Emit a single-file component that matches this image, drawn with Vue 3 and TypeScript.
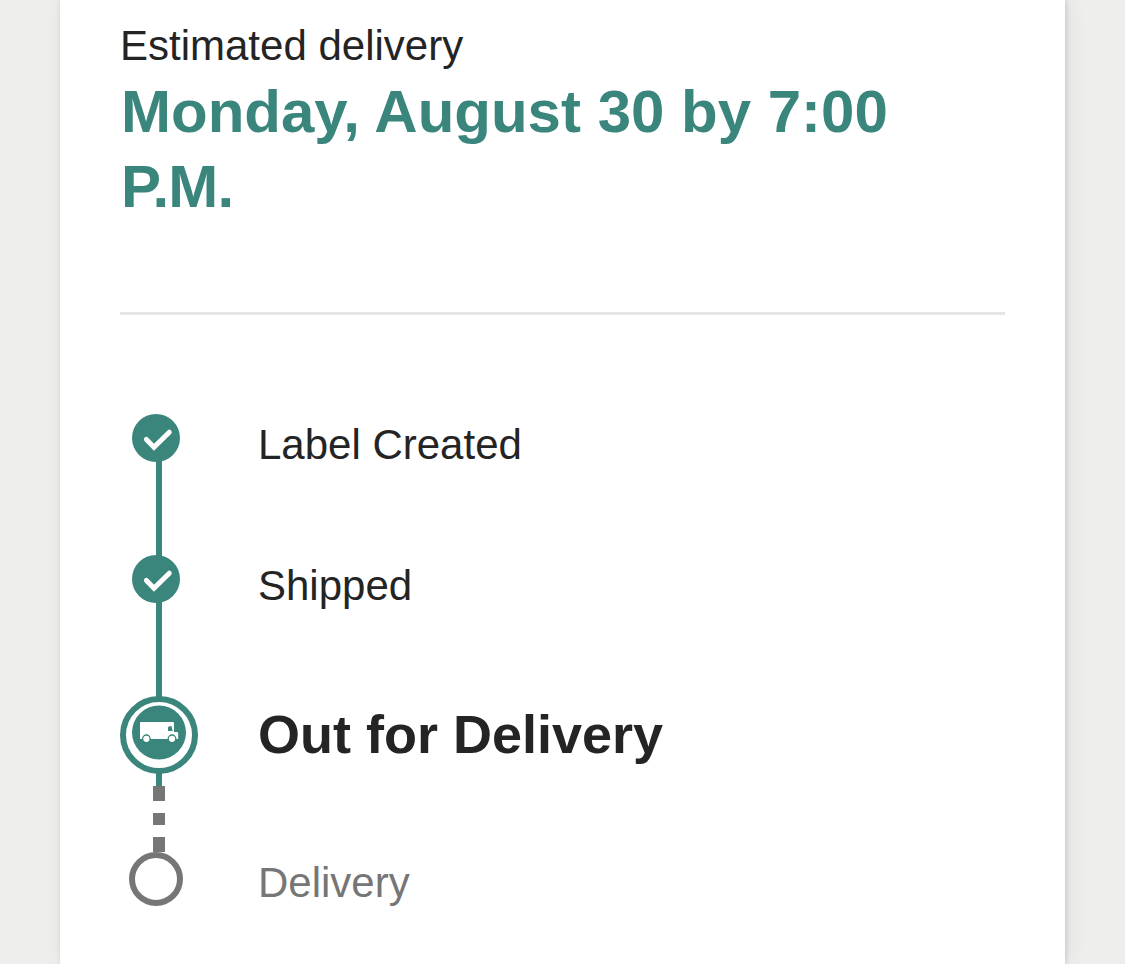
<script setup lang="ts">
type StepState = 'done' | 'current' | 'pending'

interface Step {
  label: string
  state: StepState
  height: number
}

const steps: Step[] = [
  { label: 'Label Created', state: 'done', height: 141 },
  { label: 'Shipped', state: 'done', height: 141 },
  { label: 'Out for Delivery', state: 'current', height: 156 },
  { label: 'Delivery', state: 'pending', height: 60 },
]
</script>

<template>
  <div class="page">
    <main class="card">
      <header class="estimate">
        <p class="caption">Estimated delivery</p>
        <h1 class="date">Monday, August 30 by 7:00 <span class="meridiem">P.M.</span></h1>
      </header>
      <ol class="steps">
        <li v-for="step in steps" :key="step.label" class="step" :class="step.state">
          <svg class="marker" width="78" :height="step.height" :viewBox="`0 0 78 ${step.height}`" aria-hidden="true">
            <template v-if="step.state === 'done'">
              <path class="teal" d="M36 24h6v118h-6z" />
              <circle class="teal" cx="36" cy="24" r="24" />
              <path class="check" d="M26.4 25.4L34 33.2L49.3 18.2" />
            </template>
            <template v-else-if="step.state === 'current'">
              <path class="teal" d="M36 74h6v16h-6z" />
              <circle class="ring" cx="39" cy="39" r="36" />
              <circle class="teal" cx="39" cy="36.5" r="27" />
              <path class="white" d="M21 26H52.8Q54 26 54 27.2V36H57Q58.2 36 58.2 37.2V43H20V27Q20 26 21 26Z" />
              <path class="teal" d="M49 30.2H51.6L52.6 35H48V31.2Z" />
              <circle class="wheel" cx="26.4" cy="42.8" r="3.8" />
              <circle class="wheel" cx="52" cy="42.8" r="3.8" />
              <path class="gray" d="M33 90h12v15H33zM33 117h12v12H33zM33 141h12v15H33z" />
            </template>
            <circle v-else class="ring" cx="36" cy="27" r="24" />
          </svg>
          <span class="label">{{ step.label }}</span>
        </li>
      </ol>
    </main>
  </div>
</template>

<style>
body {
  margin: 0;
  background: #eeeeec;
}
</style>

<style scoped>
.page {
  box-sizing: border-box;
  height: 964px;
  padding: 0 60px;
  overflow: hidden;
  background: #eeeeec;
  font-family: "Liberation Sans", Arial, sans-serif;
  color: #242424;
}

.card {
  box-sizing: border-box;
  height: 964px;
  padding: 17px 60px 0;
  background: #fff;
  box-shadow: 1px 0 5px rgba(0, 0, 0, 0.13), 3px 0 20px rgba(0, 0, 0, 0.07);
}

.estimate {
  box-sizing: border-box;
  height: 298px;
  border-bottom: 3px solid #e5e5e5;
}

.caption {
  margin: 0;
  font-size: 42px;
  line-height: 58px;
}

.date {
  margin: -1px 0 0;
  padding-left: 1px;
  font-size: 60px;
  line-height: 75px;
  font-weight: 700;
  color: #3a857c;
}

.meridiem {
  letter-spacing: -0.8px;
}

.steps {
  margin: 99px 0 0;
  padding: 0;
  list-style: none;
}

.step {
  display: flex;
  align-items: flex-start;
  gap: 60px;
  font-size: 42px;
  line-height: 60px;
}

.marker {
  display: block;
  flex: none;
  overflow: visible;
}

.label {
  padding-top: 1px;
}

.current .label {
  padding-top: 8px;
  font-size: 54px;
  font-weight: 700;
}

.pending .label {
  color: #767676;
}

.teal {
  fill: #3a857c;
}

.white {
  fill: #fff;
}

.gray {
  fill: #767676;
}

.ring {
  fill: none;
  stroke: #3a857c;
  stroke-width: 6;
}

.pending .ring {
  stroke: #767676;
}

.check {
  fill: none;
  stroke: #fff;
  stroke-width: 5;
  stroke-linecap: round;
}

.wheel {
  fill: #fff;
  stroke: #3a857c;
  stroke-width: 1.3;
}
</style>
